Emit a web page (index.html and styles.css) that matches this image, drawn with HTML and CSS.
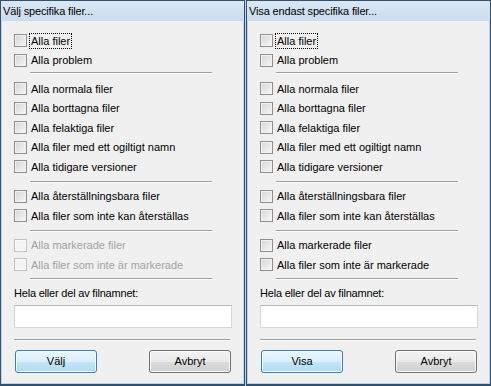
FILE: index.html
```html
<!DOCTYPE html>
<html lang="sv">
<head>
<meta charset="utf-8">
<title>Filer</title>
<link rel="stylesheet" href="styles.css">
</head>
<body>
<div class="wrap">
  <section class="panel">
    <div class="title">Välj specifika filer...</div>
    <div class="body">
      <div class="row"><span class="cb"></span><span class="lbl focus">Alla filer</span></div>
      <div class="row"><span class="cb"></span><span class="lbl">Alla problem</span></div>
      <div class="sep sep1"></div>
      <div class="row"><span class="cb"></span><span class="lbl">Alla normala filer</span></div>
      <div class="row"><span class="cb"></span><span class="lbl">Alla borttagna filer</span></div>
      <div class="row"><span class="cb"></span><span class="lbl">Alla felaktiga filer</span></div>
      <div class="row"><span class="cb"></span><span class="lbl">Alla filer med ett ogiltigt namn</span></div>
      <div class="row"><span class="cb"></span><span class="lbl">Alla tidigare versioner</span></div>
      <div class="sep sep2"></div>
      <div class="row"><span class="cb"></span><span class="lbl">Alla återställningsbara filer</span></div>
      <div class="row"><span class="cb"></span><span class="lbl">Alla filer som inte kan återställas</span></div>
      <div class="sep sep2"></div>
      <div class="row disabled"><span class="cb"></span><span class="lbl">Alla markerade filer</span></div>
      <div class="row disabled"><span class="cb"></span><span class="lbl">Alla filer som inte är markerade</span></div>
      <div class="sep sep4"></div>
      <div class="field-label">Hela eller del av filnamnet:</div>
      <div class="input"></div>
      <div class="sep sep5"></div>
      <div class="buttons">
        <button class="btn default">Välj</button>
        <button class="btn">Avbryt</button>
      </div>
    </div>
  </section>
  <section class="panel">
    <div class="title">Visa endast specifika filer...</div>
    <div class="body">
      <div class="row"><span class="cb"></span><span class="lbl focus">Alla filer</span></div>
      <div class="row"><span class="cb"></span><span class="lbl">Alla problem</span></div>
      <div class="sep sep1"></div>
      <div class="row"><span class="cb"></span><span class="lbl">Alla normala filer</span></div>
      <div class="row"><span class="cb"></span><span class="lbl">Alla borttagna filer</span></div>
      <div class="row"><span class="cb"></span><span class="lbl">Alla felaktiga filer</span></div>
      <div class="row"><span class="cb"></span><span class="lbl">Alla filer med ett ogiltigt namn</span></div>
      <div class="row"><span class="cb"></span><span class="lbl">Alla tidigare versioner</span></div>
      <div class="sep sep2"></div>
      <div class="row"><span class="cb"></span><span class="lbl">Alla återställningsbara filer</span></div>
      <div class="row"><span class="cb"></span><span class="lbl">Alla filer som inte kan återställas</span></div>
      <div class="sep sep2"></div>
      <div class="row"><span class="cb"></span><span class="lbl">Alla markerade filer</span></div>
      <div class="row"><span class="cb"></span><span class="lbl">Alla filer som inte är markerade</span></div>
      <div class="sep sep4"></div>
      <div class="field-label">Hela eller del av filnamnet:</div>
      <div class="input"></div>
      <div class="sep sep5"></div>
      <div class="buttons">
        <button class="btn default">Visa</button>
        <button class="btn">Avbryt</button>
      </div>
    </div>
  </section>
</div>
</body>
</html>
```

FILE: styles.css
```css
html, body {
  margin: 0;
  padding: 0;
}
body {
  background: #b8d0e9;
  font-family: "Liberation Sans", Arial, sans-serif;
  font-size: 11px;
  color: #000;
}
.wrap {
  display: flex;
  gap: 1px;
  width: 491px;
  height: 386px;
}
.panel {
  box-sizing: border-box;
  width: 245px;
  height: 386px;
  border: 1px solid #34506a;
  border-bottom-width: 2px;
  background: #f0f0f0;
  box-shadow: inset 0 0 0 1px #bcd4ec;
  display: flex;
  flex-direction: column;
}
.title {
  height: 20px;
  line-height: 20px;
  padding-left: 2px;
  font-size: 11px;
  letter-spacing: -0.15px;
  background: linear-gradient(#dae6f4, #cbdcef);
  white-space: nowrap;
}
.body {
  padding: 10px 12px 0 13px;
  display: flex;
  flex-direction: column;
}
.row {
  height: 19.5px;
  display: flex;
  align-items: center;
}
.cb {
  box-sizing: border-box;
  width: 13px;
  height: 13px;
  border: 1px solid #8e8f8f;
  background: linear-gradient(135deg, #d6d6d6, #f7f7f7);
  box-shadow: inset 0 0 0 1px #f2f2f2;
  margin-right: 2px;
  flex: none;
}
.lbl {
  border: 1px dotted transparent;
  padding: 0 1px;
  line-height: 14px;
  white-space: nowrap;
}
.lbl.focus {
  border-color: #000;
}
.row.disabled .lbl {
  color: #a2a2a2;
}
.row.disabled .cb {
  border-color: #c2c2c2;
  background: #f4f4f4;
  box-shadow: inset 0 0 0 1px #fafafa;
}
.sep {
  height: 1px;
  background: #a0a0a0;
  box-shadow: 0 1px 0 #fcfcfc;
  margin-left: 16px;
  width: 182px;
}
.sep1 {
  margin-top: 2px;
  margin-bottom: 6px;
}
.sep2 {
  margin-top: 4.5px;
  margin-bottom: 4.5px;
}
.sep4 {
  margin-top: 3.5px;
  margin-bottom: 6.5px;
}
.field-label {
  height: 15px;
  line-height: 15px;
  letter-spacing: -0.2px;
  white-space: nowrap;
}
.input {
  box-sizing: border-box;
  margin-top: 4px;
  height: 23px;
  width: 218px;
  background: #fff;
  border: 1px solid #d3d8df;
  border-top-color: #b4b8bf;
}
.sep5 {
  margin-left: 0;
  width: 216px;
  margin-top: 11px;
  margin-bottom: 10px;
}
.buttons {
  display: flex;
  justify-content: space-between;
  padding: 0 1px 0 1px;
}
.btn {
  box-sizing: border-box;
  width: 82px;
  height: 23px;
  border: 1px solid #707070;
  border-radius: 3px;
  font-family: "Liberation Sans", Arial, sans-serif;
  font-size: 11px;
  color: #000;
  padding: 0;
  background: linear-gradient(#f2f2f2 0%, #ebebeb 50%, #dddddd 50%, #cfcfcf 100%);
  box-shadow: inset 0 0 0 1px #fbfbfb;
}
.btn.default {
  border-color: #3c7fb1;
  background: linear-gradient(#eaf6fd 0%, #d9f0fc 50%, #c6e6f8 50%, #aedbf3 100%);
  box-shadow: inset 0 0 0 1px #f4fbff;
}
```
